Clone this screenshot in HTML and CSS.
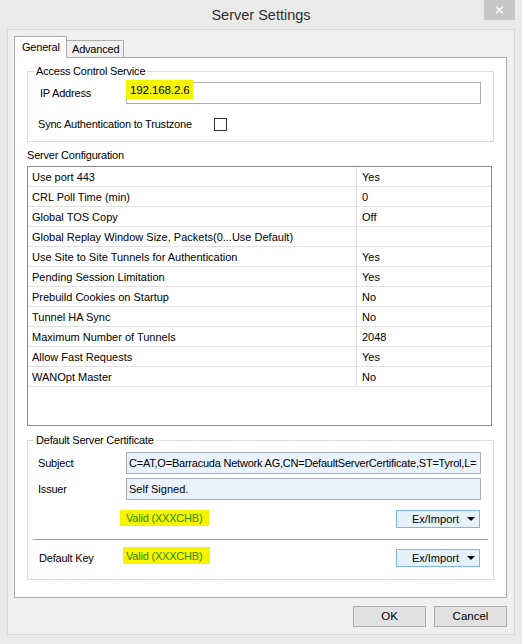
FILE: index.html
```html
<!DOCTYPE html>
<html>
<head>
<meta charset="utf-8">
<title>Server Settings</title>
<link rel="stylesheet" href="styles.css">
</head>
<body>
<div class="window">
  <div class="titlebar">
    <span></span>
    <div class="title">Server Settings</div>
    <div class="close">
      <svg width="9" height="8" viewBox="0 0 9 8"><path d="M1 0.5 L8 7.5 M8 0.5 L1 7.5" stroke="#fff" stroke-width="1.3" fill="none"/></svg>
    </div>
  </div>
  <div class="client">
    <div class="tabs">
      <div class="tab active">General</div>
      <div class="tab inactive">Advanced</div>
    </div>
    <div class="panel">
      <div class="group g1">
        <div class="legend">Access Control Service</div>
        <div class="frow ip-row">
          <span class="lbl lbl-ip">IP Address</span>
          <div class="field field-ip"><span class="hl hl-ip">192.168.2.6</span></div>
        </div>
        <div class="sync-row">
          <span class="lbl-sync">Sync Authentication to Trustzone</span>
          <span class="check"></span>
        </div>
      </div>

      <div class="section-label">Server Configuration</div>
      <div class="grid">
        <div class="gr"><div class="c1">Use port 443</div><div class="c2">Yes</div></div>
        <div class="gr"><div class="c1">CRL Poll Time (min)</div><div class="c2">0</div></div>
        <div class="gr"><div class="c1">Global TOS Copy</div><div class="c2">Off</div></div>
        <div class="gr"><div class="c1">Global Replay Window Size, Packets(0...Use Default)</div><div class="c2"></div></div>
        <div class="gr"><div class="c1">Use Site to Site Tunnels for Authentication</div><div class="c2">Yes</div></div>
        <div class="gr"><div class="c1">Pending Session Limitation</div><div class="c2">Yes</div></div>
        <div class="gr"><div class="c1">Prebuild Cookies on Startup</div><div class="c2">No</div></div>
        <div class="gr"><div class="c1">Tunnel HA Sync</div><div class="c2">No</div></div>
        <div class="gr"><div class="c1">Maximum Number of Tunnels</div><div class="c2">2048</div></div>
        <div class="gr"><div class="c1">Allow Fast Requests</div><div class="c2">Yes</div></div>
        <div class="gr"><div class="c1">WANOpt Master</div><div class="c2">No</div></div>
      </div>

      <div class="group g2">
        <div class="legend">Default Server Certificate</div>
        <div class="frow subj-row">
          <span class="lbl">Subject</span>
          <div class="field ro"><span class="ftext subj-text">C=AT,O=Barracuda Network AG,CN=DefaultServerCertificate,ST=Tyrol,L=</span></div>
        </div>
        <div class="frow issuer-row">
          <span class="lbl">Issuer</span>
          <div class="field ro"><span class="ftext">Self Signed.</span></div>
        </div>
        <div class="vrow valid-row">
          <span class="hl hl-valid">Valid (XXXCHB)</span>
          <div class="ex"><span>Ex/Import</span><span class="tri"></span></div>
        </div>
        <div class="sep"></div>
        <div class="vrow key-row">
          <span class="lbl lbl-key">Default Key</span>
          <span class="hl hl-key">Valid (XXXCHB)</span>
          <div class="ex"><span>Ex/Import</span><span class="tri"></span></div>
        </div>
      </div>
    </div>
    <div class="buttons">
      <div class="btn">OK</div>
      <div class="btn">Cancel</div>
    </div>
  </div>
</div>
</body>
</html>
```

FILE: styles.css
```css
* { box-sizing: border-box; }

body {
  margin: 0;
  background: #eaeaea;
  font-family: "Liberation Sans", Arial, sans-serif;
  font-size: 11px;
  color: #000;
}

.window {
  width: 522px;
  height: 644px;
  display: flex;
  flex-direction: column;
}

.titlebar {
  height: 29px;
  display: grid;
  grid-template-columns: 1fr auto 1fr;
}

.title {
  font-size: 14.5px;
  line-height: 18px;
  padding-top: 6px;
  color: #2e2e2e;
}

.close {
  justify-self: end;
  width: 31px;
  height: 20px;
  margin-right: 7px;
  background: #c7c7c7;
  display: flex;
  align-items: center;
  justify-content: center;
}

.client {
  flex: 1;
  margin: 0 7px 9px;
  border: 1px solid #d9d9d9;
  background: #f0f0f0;
  display: flex;
  flex-direction: column;
}

.tabs {
  display: flex;
  align-items: flex-end;
  margin: 6px 0 0 6px;
}

.tab {
  border: 1px solid #acacac;
  border-bottom: none;
  line-height: 14px;
  letter-spacing: -0.2px;
}

.tab.active {
  background: #fff;
  width: 53px;
  height: 22px;
  padding: 3px 0 0 7px;
  margin-bottom: -1px;
  position: relative;
  z-index: 1;
}

.tab.inactive {
  background: #f0f0f0;
  width: 57px;
  height: 17px;
  border-left: none;
  padding: 1px 0 0 5px;
}

.panel {
  margin-left: 6px;
  width: 493px;
  height: 541px;
  border: 1px solid #acacac;
  background: #fff;
  display: flex;
  flex-direction: column;
}

.group {
  border: 1px solid #dcdcdc;
  margin: 13px 12px 0;
  letter-spacing: -0.2px;
}

.legend {
  margin: -8px 0 0 6px;
  padding: 0 2px;
  background: #fff;
  line-height: 14px;
  width: max-content;
}

.frow {
  display: flex;
  align-items: center;
  height: 22px;
}

.ip-row { margin-top: 4px; }
.subj-row { margin-top: 5px; }
.issuer-row { margin-top: 4px; }

.lbl {
  width: 98px;
  padding-left: 10px;
  line-height: 14px;
}

.lbl-ip { padding-left: 12px; }

.field {
  width: 355px;
  height: 22px;
  border: 1px solid #abadb3;
  background: #fff;
}

.field.ro {
  background: #eaf2fc;
  overflow: hidden;
  white-space: nowrap;
  font-size: 11px;
  letter-spacing: 0;
}

.ftext {
  display: block;
  padding: 3px 0 0 2px;
  line-height: 14px;
}

.subj-text {
  letter-spacing: -0.22px;
}

.hl {
  background: #f5f500;
  display: block;
}

.hl-ip {
  width: 67px;
  height: 19px;
  margin: -3px 0 0 -1px;
  padding: 2px 0 0 4px;
  line-height: 16px;
  font-size: 11.5px;
  letter-spacing: -0.1px;
}

.sync-row {
  display: flex;
  align-items: center;
  height: 16px;
  margin: 12px 0 9px;
  padding-left: 10px;
}

.lbl-sync {
  width: 176px;
  line-height: 14px;
}

.check {
  width: 13px;
  height: 13px;
  border: 1px solid #333;
  background: #fff;
}

.section-label {
  margin: 6px 0 0 12px;
  line-height: 14px;
  letter-spacing: -0.2px;
}

.grid {
  margin: 4px 14px 0 12px;
  height: 260px;
  border: 1px solid #8a8a8a;
  background: #fff;
}

.gr {
  display: flex;
  height: 20px;
}

.c1, .c2 {
  height: 20px;
  border-bottom: 1px solid #e3e3e3;
  padding: 1px 0 0 4px;
  line-height: 19px;
  white-space: nowrap;
}

.c1 {
  width: 329px;
  border-right: 1px solid #e3e3e3;
}

.c2 {
  flex: 1;
  margin-left: 1px;
}

.g2 { margin-top: 14px; }

.vrow {
  display: flex;
  align-items: flex-start;
  height: 18px;
}

.valid-row { margin-top: 10px; }
.key-row { margin-top: 9px; margin-bottom: 12px; }

.hl-valid {
  margin-left: 92px;
  width: 89px;
  height: 16px;
  padding-left: 6px;
  line-height: 16px;
  color: #2f8a00;
}

.lbl-key {
  width: 95px;
  padding-left: 11px;
  line-height: 18px;
}

.hl-key {
  width: 87px;
  height: 17px;
  margin-top: -2px;
  padding-left: 3px;
  line-height: 18px;
  color: #2f8a00;
}

.ex {
  margin-left: auto;
  margin-right: 13px;
  width: 84px;
  height: 18px;
  border: 1px solid #7eb4ea;
  background: #e5f1fb;
  display: flex;
  align-items: center;
  justify-content: flex-end;
  padding-right: 4px;
  letter-spacing: 0;
}

.tri {
  width: 0;
  height: 0;
  margin-left: 8px;
  border-left: 4px solid transparent;
  border-right: 4px solid transparent;
  border-top: 4px solid #000;
}

.sep {
  height: 1px;
  margin: 11px 5px 0;
  background: #a0a0a0;
}

.buttons {
  display: flex;
  justify-content: flex-end;
  gap: 8px;
  margin: 8px 7px 0 0;
}

.btn {
  width: 73px;
  height: 21px;
  border: 1px solid #adadad;
  background: #e1e1e1;
  text-align: center;
  line-height: 19px;
  font-size: 11.5px;
}
```
